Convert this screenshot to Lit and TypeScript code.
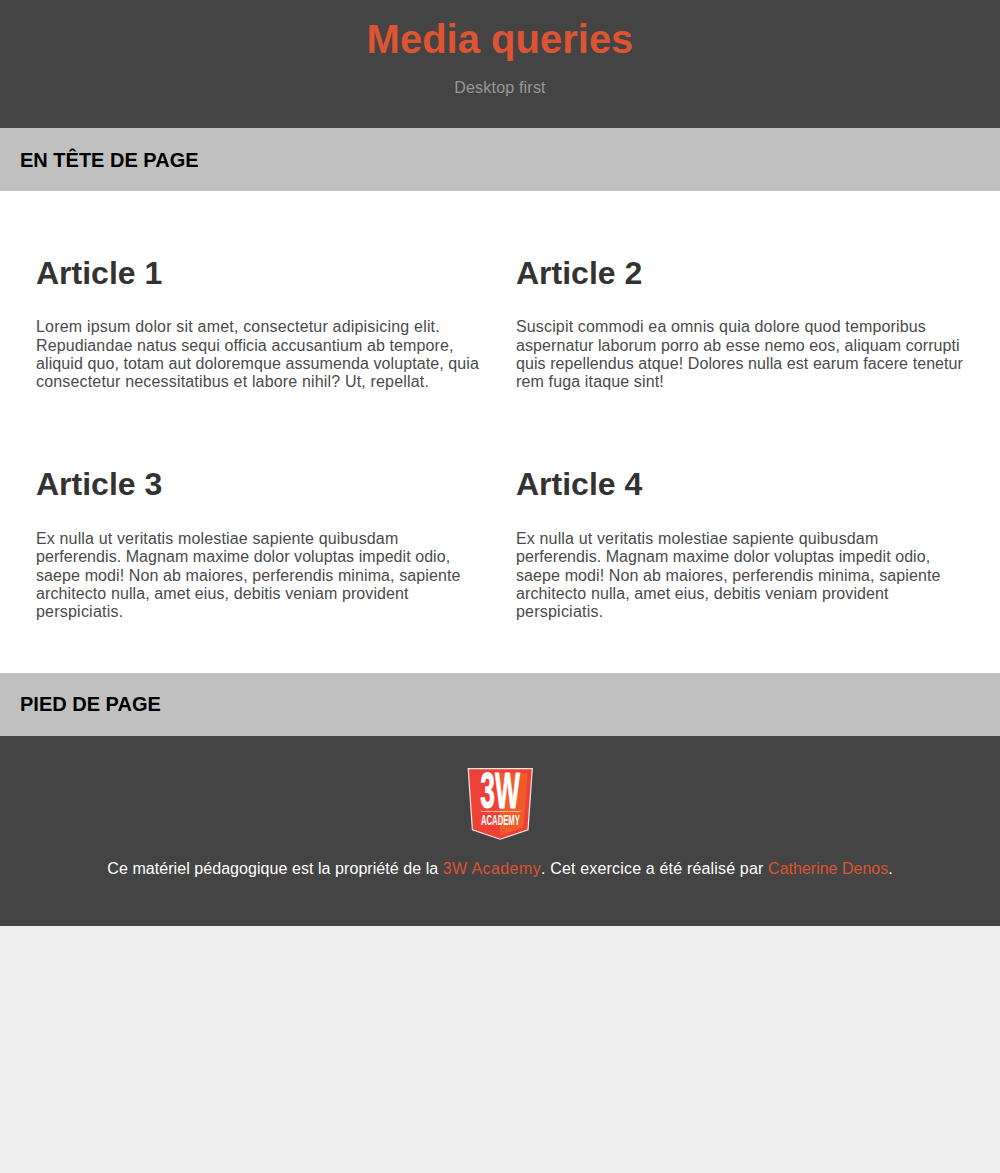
import { LitElement, html, css } from "lit";
import { customElement } from "lit/decorators.js";
import { styleMap } from "lit/directives/style-map.js";

type Line = [text: string, tracking: number];

const exNulla: Line[] = [
  ["Ex nulla ut veritatis molestiae sapiente quibusdam", 0.15],
  ["perferendis. Magnam maxime dolor voluptas impedit odio,", 0.06],
  ["saepe modi! Non ab maiores, perferendis minima, sapiente", 0.1],
  ["architecto nulla, amet eius, debitis veniam provident", 0.1],
  ["perspiciatis.", 0.22],
];

const articles: { title: string; lines: Line[] }[] = [
  {
    title: "Article 1",
    lines: [
      ["Lorem ipsum dolor sit amet, consectetur adipisicing elit.", 0.19],
      ["Repudiandae natus sequi officia accusantium ab tempore,", 0.11],
      ["aliquid quo, totam aut doloremque assumenda voluptate, quia", 0.09],
      ["consectetur necessitatibus et labore nihil? Ut, repellat.", 0.17],
    ],
  },
  {
    title: "Article 2",
    lines: [
      ["Suscipit commodi ea omnis quia dolore quod temporibus", 0.15],
      ["aspernatur laborum porro ab esse nemo eos, aliquam corrupti", 0.09],
      ["quis repellendus atque! Dolores nulla est earum facere tenetur", 0.08],
      ["rem fuga itaque sint!", 0.14],
    ],
  },
  { title: "Article 3", lines: exNulla },
  { title: "Article 4", lines: exNulla },
];

const tracked = ([text, tracking]: Line) =>
  html`<span class="line" style=${styleMap({ letterSpacing: `${tracking}px` })}>${text}</span>`;

@customElement("app-root")
export class AppRoot extends LitElement {
  static styles = css`
    :host { display: block; min-height: 1173px; background: #eee; font: 16px/18.4px "Liberation Sans", Arial, sans-serif; color: #4a4a4a; }
    * { box-sizing: border-box; }
    h1, h2, h3, p { margin: 0; }
    .top { height: 128px; padding-top: 16px; background: #444; text-align: center; }
    .top h1 { font-size: 40px; line-height: 46px; color: #dd5433; }
    .top p { margin-top: 17px; color: #999; letter-spacing: 0.2px; }
    .bar { height: 63px; padding-left: 20px; background: #c0c0c0; color: #000; font-size: 20px; line-height: 63px; }
    .bar.head { line-height: 64px; }
    .grid { display: grid; grid-template-columns: 480px 480px; grid-template-rows: 211.5px 210.5px; padding: 40px 20px 20px; height: 482px; background: #fff; }
    .card { padding: 23.8px 0 0 16px; white-space: nowrap; }
    .card h2 { color: #333; font-size: 32px; line-height: 37px; margin-bottom: 26.4px; }
    .line { display: block; }
    .foot { height: 190px; padding-top: 32px; background: #444; color: #fff; text-align: center; }
    .foot p { margin-top: 20px; letter-spacing: 0.06px; }
    .foot a { color: #dd5433; }
    .foot .school { letter-spacing: 0.4px; }
    .foot .mid { letter-spacing: 0.17px; }
    .foot .author { letter-spacing: 0; }
    .logo { display: block; margin: 0 auto; overflow: visible; }
    .logo text { font-family: "Liberation Sans", Arial, sans-serif; font-weight: 700; fill: #fff; }
  `;

  render() {
    return html`
      <header class="top"><h1>Media queries</h1><p>Desktop first</p></header>
      <h3 class="bar head">EN TÊTE DE PAGE</h3>
      <main class="grid">
        ${articles.map((a) => html`<article class="card"><h2>${a.title}</h2><p>${a.lines.map(tracked)}</p></article>`)}
      </main>
      <h3 class="bar">PIED DE PAGE</h3>
      <footer class="foot">
        <svg class="logo" width="66" height="72" viewBox="0 0 66 72">
          <path d="M1.2.7H65.3L61 61.8 33.2 71.2 5.4 61.8Z" fill="#ee4036" />
          <path d="M33 5H60.5L56.6 59.5 33 67.5Z" fill="#f15a29" />
          <path d="M1.2.7H65.3L61 61.8 33.2 71.2 5.4 61.8Z" fill="none" stroke="#f4e6e2" stroke-width="1.2" />
          <text transform="translate(13.2 39.6) scale(.44 1)" font-size="49.5" textLength="90" lengthAdjust="spacingAndGlyphs" stroke="#fff" stroke-width=".9">3W</text>
          <path d="M14 43.4H53.5" stroke="#f9b9a6" />
          <text transform="translate(14 57) scale(.54 1)" font-size="15" textLength="72" lengthAdjust="spacingAndGlyphs">ACADEMY</text>
        </svg>
        <p>Ce matériel pédagogique est la propriété de la <a class="school">3W Academy</a><span class="mid">. Cet exercice a été réalisé par </span><a class="author">Catherine Denos</a>.</p>
      </footer>
    `;
  }
}
